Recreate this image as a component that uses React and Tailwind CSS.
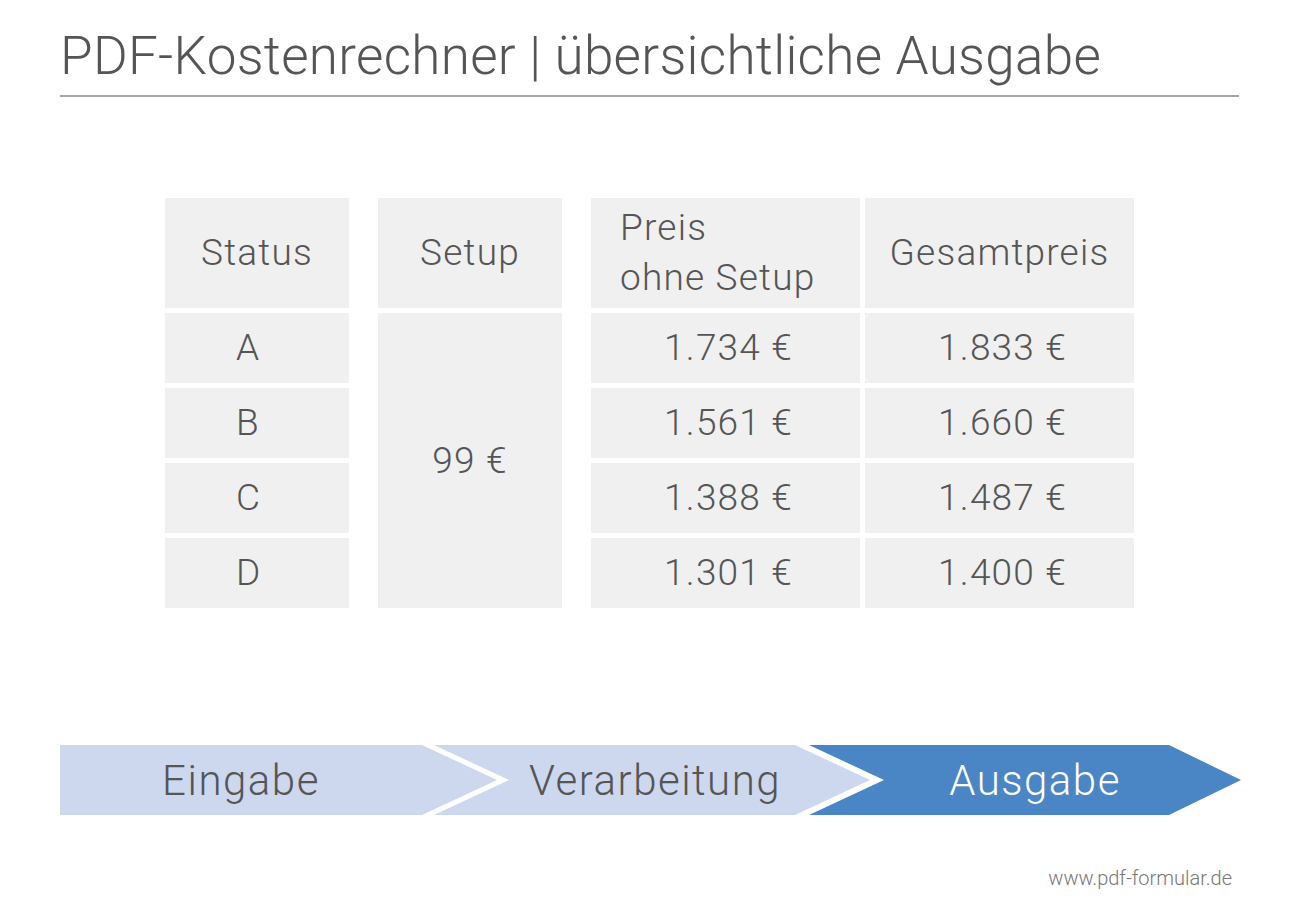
import React from 'react';

const ROWS = [
    { status: 'A', price: '1.734 €', total: '1.833 €' },
    { status: 'B', price: '1.561 €', total: '1.660 €' },
    { status: 'C', price: '1.388 €', total: '1.487 €' },
    { status: 'D', price: '1.301 €', total: '1.400 €' },
];

const STEPS = [
    { label: 'Eingabe', bg: 'bg-[#cdd7ee]', text: 'text-[#555555]', clip: '[clip-path:polygon(0_0,362px_0,437px_50%,362px_100%,0_100%)]', pad: 'pr-[75px]', ml: '' },
    { label: 'Verarbeitung', bg: 'bg-[#cdd7ee]', text: 'text-[#555555]', clip: '[clip-path:polygon(0_0,361px_0,436px_50%,361px_100%,0_100%,75px_50%)]', pad: 'pl-[75px] pr-[70px]', ml: '-ml-[63px]' },
    { label: 'Ausgabe', bg: 'bg-[#4a86c5]', text: 'text-white', clip: '[clip-path:polygon(0_0,360px_0,432px_50%,360px_100%,0_100%,75px_50%)]', pad: 'pl-[75px] pr-[60px]', ml: '-ml-[62px]' },
];

// shared look of a table cell
const cell = 'bg-[#f0f0f0] flex items-center text-[37px] font-light tracking-[1.2px]';

const App = () => {
    return (
        <div className="w-[1299px] h-[909px] bg-white text-[#555555] font-['Roboto',sans-serif] flex flex-col">
            {/* Title */}
            <div className="mx-[60px] pt-[24px] border-b-2 border-[#a6a6a6] h-[97px]">
                <h1 className="text-[53px] leading-[64px] font-light tracking-[0.3px]">PDF-Kostenrechner | übersichtliche Ausgabe</h1>
            </div>

            {/* Table */}
            <div className="flex ml-[165px] mt-[101px]">
                <div className="flex flex-col gap-[5px] w-[184px]">
                    <div className={`${cell} h-[110px] justify-center`}>Status</div>
                    {ROWS.map(r => (
                        <div key={r.status} className={`${cell} h-[70px] pl-[71px]`}>{r.status}</div>
                    ))}
                </div>
                <div className="flex flex-col gap-[5px] w-[184px] ml-[29px]">
                    <div className={`${cell} h-[110px] justify-center`}>Setup</div>
                    <div className={`${cell} h-[295px] justify-center`}>99 €</div>
                </div>
                <div className="grid grid-cols-[269px_269px] gap-[5px] ml-[29px]">
                    <div className={`${cell} h-[110px] pl-[29px] leading-[50px]`}>
                        <span>Preis<br />ohne Setup</span>
                    </div>
                    <div className={`${cell} h-[110px] justify-center`}>Gesamtpreis</div>
                    {ROWS.map(r => (
                        <React.Fragment key={r.status}>
                            <div className={`${cell} h-[70px] justify-end pr-[67px]`}>{r.price}</div>
                            <div className={`${cell} h-[70px] justify-end pr-[67px]`}>{r.total}</div>
                        </React.Fragment>
                    ))}
                </div>
            </div>

            {/* Process arrows */}
            <div className="flex ml-[60px] mt-[137px] h-[70px]">
                {STEPS.map(s => (
                    <div key={s.label} className={`${s.bg} ${s.text} ${s.clip} ${s.pad} ${s.ml} w-[437px] h-[70px] flex items-center justify-center text-[42px] font-light tracking-[1.5px]`}>
                        {s.label}
                    </div>
                ))}
            </div>

            {/* Footer */}
            <div className="flex justify-end mr-[67px] mt-[48px]">
                <span className="text-[20px] text-[#777777] font-light">www.pdf-formular.de</span>
            </div>
        </div>
    );
};

export default App;
